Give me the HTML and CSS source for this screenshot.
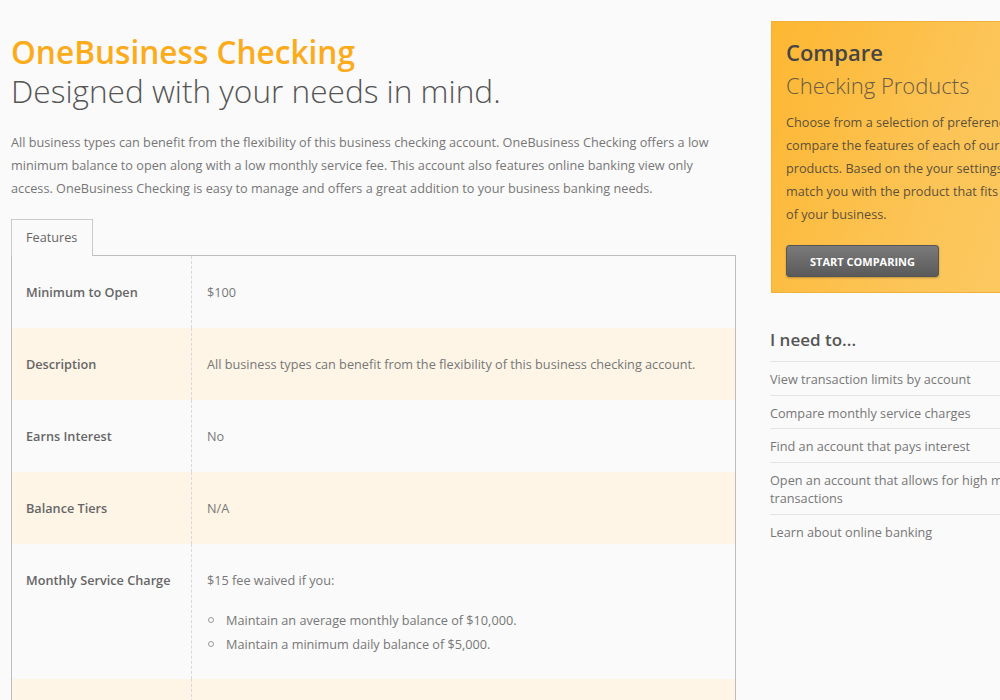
FILE: index.html
```html
<!DOCTYPE html>
<html>
<head>
<meta charset="utf-8">
<link rel="stylesheet" href="styles.css">
</head>
<body>
<div class="page">
  <main class="main">
    <h1 class="title">OneBusiness Checking</h1>
    <h2 class="subtitle">Designed with your needs in mind.</h2>
    <p class="intro">All business types can benefit from the flexibility of this business checking account. OneBusiness Checking offers a low minimum balance to open along with a low monthly service fee. This account also features online banking view only access. OneBusiness Checking is easy to manage and offers a great addition to your business banking needs.</p>
    <div class="tabs"><span class="tab">Features</span></div>
    <div class="table">
      <div class="row">
        <div class="label">Minimum to Open</div>
        <div class="value">$100</div>
      </div>
      <div class="row alt">
        <div class="label">Description</div>
        <div class="value">All business types can benefit from the flexibility of this business checking account.</div>
      </div>
      <div class="row">
        <div class="label">Earns Interest</div>
        <div class="value">No</div>
      </div>
      <div class="row alt">
        <div class="label">Balance Tiers</div>
        <div class="value">N/A</div>
      </div>
      <div class="row">
        <div class="label">Monthly Service Charge</div>
        <div class="value">
          <p class="value-p">$15 fee waived if you:</p>
          <ul class="bullets">
            <li>Maintain an average monthly balance of $10,000.</li>
            <li>Maintain a minimum daily balance of $5,000.</li>
          </ul>
        </div>
      </div>
      <div class="row alt">
        <div class="label">Transactions</div>
        <div class="value">Up to 100 free transactions per month.</div>
      </div>
    </div>
  </main>
  <aside class="side">
    <div class="promo">
      <h3 class="promo-title">Compare</h3>
      <h4 class="promo-sub">Checking Products</h4>
      <p class="promo-text">Choose from a selection of preferences to<br>compare the features of each of our checking<br>products. Based on the your settings, we'll<br>match you with the product that fits the needs<br>of your business.</p>
      <button class="btn">START COMPARING</button>
    </div>
    <h3 class="need">I need to...</h3>
    <ul class="links">
      <li><a href="#">View transaction limits by account</a></li>
      <li><a href="#">Compare monthly service charges</a></li>
      <li><a href="#">Find an account that pays interest</a></li>
      <li><a href="#">Open an account that allows for high monthly transactions</a></li>
      <li><a href="#">Learn about online banking</a></li>
    </ul>
  </aside>
</div>
</body>
</html>
```

FILE: styles.css
```css
html, body {
  margin: 0;
  padding: 0;
  background: #fafafa;
  overflow: hidden;
}
body {
  font-family: "Open Sans", "Liberation Sans", sans-serif;
  color: #777;
}
.page {
  display: flex;
  gap: 34px;
  width: 1100px;
  padding: 21px 0 0 11px;
}
.main {
  width: 725px;
  flex: none;
}
.title {
  margin: 11px 0 0;
  font-size: 31.6px;
  font-weight: 600;
  line-height: 40px;
  color: #fcab1a;
}
.subtitle {
  margin: -1px 0 0;
  font-size: 31.6px;
  font-weight: 300;
  line-height: 40px;
  color: #555;
}
.intro {
  margin: 20px 0 0;
  font-size: 12.7px;
  line-height: 23px;
  color: #777;
}
.tabs {
  display: flex;
  margin-top: 18px;
}
.tab {
  display: block;
  height: 36px;
  line-height: 35px;
  padding: 0 15px 0 14px;
  border: 1px solid #c9c9c9;
  border-bottom: none;
  font-size: 12.7px;
  color: #666;
  background: #fafafa;
  position: relative;
  top: 1px;
}
.table {
  border: 1px solid #bdbdbd;
}
.row {
  display: flex;
  font-size: 12.7px;
  line-height: 20px;
}
.row.alt {
  background: #fef5e6;
}
.label {
  width: 165px;
  flex: none;
  padding: 26px 0 26px 14px;
  border-right: 1px dashed #d8d8d8;
  font-weight: 600;
  color: #666;
}
.value {
  padding: 26px 15px 26px 15px;
  color: #777;
}
.value-p {
  margin: 0 0 18px;
}
.bullets {
  list-style: none;
  margin: 0 0 -3px;
  padding: 0;
}
.bullets li {
  position: relative;
  padding-left: 19px;
  line-height: 24px;
}
.bullets li::before {
  content: "";
  position: absolute;
  left: 1px;
  top: 9px;
  width: 4px;
  height: 4px;
  border: 1px solid #999;
  border-radius: 50%;
}
.side {
  width: 300px;
  flex: none;
}
.promo {
  background: linear-gradient(110deg, #fdb732 0%, #fcc456 55%, #fdcb66 100%);
  border: 1px solid #f2b23a;
  padding: 15px 15px 15px 14px;
  margin-left: 1px;
}
.promo-title {
  margin: 0;
  font-size: 22px;
  line-height: 30px;
  font-weight: 600;
  color: #474544;
}
.promo-sub {
  margin: 3px 0 0;
  font-size: 22px;
  line-height: 30px;
  font-weight: 300;
  color: #6a5c44;
}
.promo-text {
  margin: 11px 0 0;
  font-size: 12.7px;
  line-height: 23px;
  color: #5e5139;
  white-space: nowrap;
}
.btn {
  margin-top: 19px;
  width: 153px;
  height: 32px;
  border: 1px solid #555;
  border-radius: 3px;
  background: linear-gradient(#7a7a7a, #5a5a5a);
  color: #fff;
  font-family: "Open Sans", "Liberation Sans", sans-serif;
  font-size: 11px;
  font-weight: 700;
  letter-spacing: 0;
  box-shadow: 0 1px 2px rgba(0,0,0,0.25);
  padding: 0;
}
.need {
  margin: 35px 0 0;
  font-size: 17px;
  line-height: 24px;
  font-weight: 600;
  color: #555;
}
.links {
  list-style: none;
  margin: 9px 0 0;
  padding: 0;
}
.links li {
  border-top: 1px solid #e4e4e4;
  padding: 8px 0 6px;
  font-size: 12.7px;
  line-height: 18.5px;
}
.links a {
  color: #777;
  text-decoration: none;
}
```
